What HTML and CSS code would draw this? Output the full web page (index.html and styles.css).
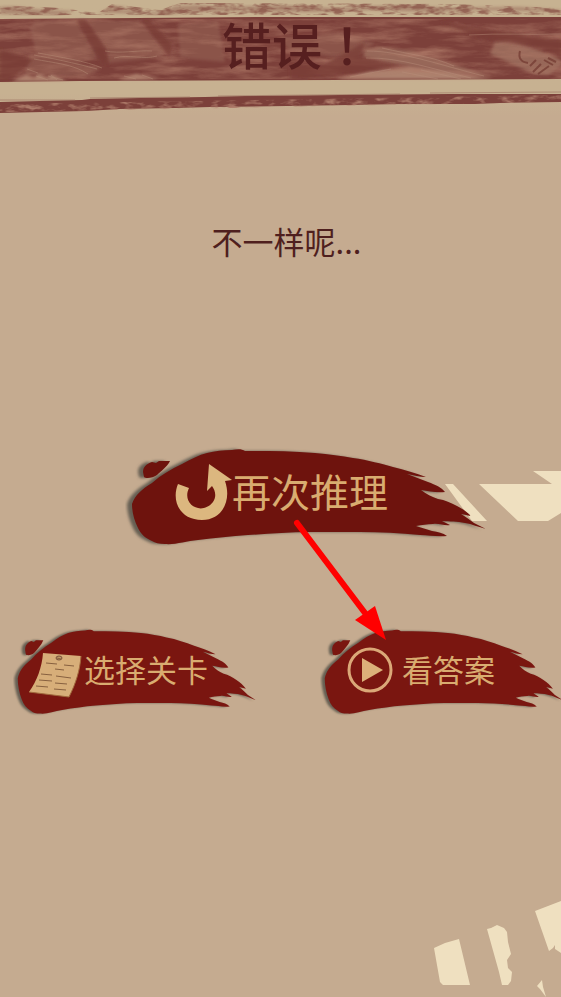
FILE: index.html
```html
<!DOCTYPE html>
<html lang="zh-CN">
<head>
<meta charset="utf-8">
<meta name="viewport" content="width=device-width, initial-scale=1">
<title>错误！</title>
<link rel="stylesheet" href="styles.css">
</head>
<body>
<svg class="defs" aria-hidden="true">
  <defs>
    <filter id="soft" x="-10%" y="-10%" width="120%" height="120%"><feGaussianBlur stdDeviation="1.5"/></filter>
    <path id="stroke" d="M7 59C10 50 17 44 27 38C36 30 46 24 57 19C66 14 74 10 82 8C90 6 98 5 107 5C113 4 117 4 120 6C142 6 166 6 190 8C204 9 217 11 228 13C243 15 257 19 268 22C280 25 291 28 301 32C294 32 289 30 282 29C289 32 296 34 303 37C311 40 316 42 320 47C311 48 304 46 296 45C301 49 307 52 313 54C320 55 326 58 332 61C338 64 342 67 346 71L336 69C341 72 345 75 349 78L361 84C353 82 347 79 340 78C332 76 325 77 317 76L325 80C319 81 314 78 308 79C302 79 297 80 291 81C296 83 302 84 307 86C313 87 318 88 322 91C312 92 304 90 295 90C275 88 255 87 235 87L185 87C163 87 143 89 123 90C106 91 90 93 73 95C61 96 50 100 40 99C34 99 30 98 27 96C20 93 16 89 13 83C9 75 7 67 7 59Z"/>
    <path id="drop" d="M18 27C18 22 21 19 27 17L31 18L34 16L45 16C42 22 36 26 32 30C28 33 21 34 19 32Z"/>
    <symbol id="brush" viewBox="0 0 364 104" preserveAspectRatio="none">
      <g class="shade" filter="url(#soft)"><use href="#stroke" x="-5"/><use href="#drop" x="-5"/></g>
      <use href="#stroke"/><use href="#drop"/>
    </symbol>
  </defs>
</svg>

<main class="screen">
  <header class="banner">
    <svg class="banner-art" viewBox="0 0 561 116" preserveAspectRatio="none" aria-hidden="true">
      <defs>
        <linearGradient id="fade" x1="0" y1="0" x2="0" y2="1"><stop offset="0" stop-color="#c7b291"/><stop offset=".8" stop-color="#c7b191"/><stop offset="1" stop-color="#c5ab90"/></linearGradient>
        <filter id="grain" x="0" y="0" width="100%" height="100%" color-interpolation-filters="sRGB">
          <feTurbulence type="fractalNoise" baseFrequency=".022 .12" numOctaves="5" seed="8"/>
          <feColorMatrix values="0 0 0 0 .68  0 0 0 0 .47  0 0 0 0 .4  1.6 0 0 0 -.62"/>
          <feComposite in2="SourceAlpha" operator="in"/>
        </filter>
        <filter id="fiber" x="0" y="0" width="100%" height="100%" color-interpolation-filters="sRGB">
          <feTurbulence type="fractalNoise" baseFrequency=".07 .2" numOctaves="3" seed="4"/>
          <feColorMatrix values="0 0 0 0 .55  0 0 0 0 .34  0 0 0 0 .29  4 0 0 0 -1.7"/>
          <feComposite in2="SourceAlpha" operator="in"/>
          <feGaussianBlur stdDeviation=".7"/>
        </filter>
        <filter id="flecks" x="0" y="0" width="100%" height="100%" color-interpolation-filters="sRGB">
          <feTurbulence type="fractalNoise" baseFrequency=".08 .2" numOctaves="3" seed="11"/>
          <feColorMatrix values="0 0 0 0 .68  0 0 0 0 .48  0 0 0 0 .41  3 0 0 0 -1.4"/>
          <feComposite in2="SourceAlpha" operator="in"/>
        </filter>
        <filter id="haze"><feGaussianBlur stdDeviation="1.5"/></filter>
      </defs>
      <rect width="561" height="116" fill="url(#fade)"/>
      <g filter="url(#haze)" fill="#a37a66" opacity=".75">
        <path d="M0 7C15 5 30 9 45 10L75 11L60 15L0 14Z"/>
        <path d="M98 14L114 6L126 7L120 11L132 9L145 12L162 12L175 6L200 5L230 7L280 5L330 8L400 5L450 8L520 7L561 10V12L480 10L430 12L370 10L310 12L240 11L190 12L165 15L145 14L112 13Z"/>
      </g>
      <path filter="url(#fiber)" opacity=".8" d="M0 5L60 8L98 13L112 4L160 10L180 3L450 4L561 8V15H0Z"/>
      <path class="maroon" d="M0 19L140 18L260 17H561V79L340 80L80 81L0 82Z"/>
      <g filter="url(#haze)">
        <path class="dust" d="M35 21L76 20L99 58L75 63L36 53L30 28ZM86 21H140L166 49L161 57L108 63L105 50ZM178 24L218 21L225 62L180 58ZM278 38L340 33L375 43L351 60L290 50ZM30 54L58 57L101 69L85 77L25 75Z"/>
        <path class="light" d="M12 81L26 75L34 78L39 74L47 78L52 75L67 81ZM118 80L136 74L158 79ZM336 79L370 71L410 67L445 71L492 79Z"/>
        <path class="log" d="M365 50L378 47L412 51L440 60L493 77L450 71L393 64L363 58ZM495 42L510 40L554 56L561 60V66L548 75L534 74L490 54Z"/>
      </g>
      <path filter="url(#grain)" d="M0 19H561V79H0Z"/>
      <g filter="url(#haze)">
        <path class="fold" d="M77 20H86L106 48L109 65L99 61ZM141 20H150L172 45L170 57L162 48ZM0 49L33 60L10 80H0ZM440 22L480 38L540 48L561 57V40L510 33ZM290 66L325 64L365 42L360 56L400 66L335 76L290 78Z"/>
      </g>
      <g class="hair">
        <path d="M34 55C50 58 75 63 97 69M34 59C54 63 73 64 88 74M38 53C60 57 86 61 102 68M105 51C120 54 138 50 152 51M114 58C129 54 144 60 157 56M367 51C401 51 440 65 484 76M382 48C411 55 432 56 454 66M366 58C400 57 435 70 471 78M402 72L438 79M421 70L461 79M350 77L391 69M469 35C500 33 530 35 561 34"/>
        <path d="M27 69L38 73M48 76L63 80M36 76L48 80M51 75L57 80M124 76L136 79M142 75L153 79"/>
      </g>
      <g class="knot"><path d="M520 51C518 58 521 62 528 63M530 66L536 60M533 72L541 64M538 74L549 66M544 60L553 65M548 58L556 62"/></g>
      <path class="maroon" d="M0 102L40 101L82 100L90 99L140 98L205 97L245 96L340 95L450 94L561 94V102L500 103L475 104L400 104L350 105L287 106L210 107L175 108L120 109L86 111L0 113Z"/>
      <path filter="url(#flecks)" d="M0 104L561 95V102L0 112Z"/>
      <path class="edge" d="M0 100L75 100M90 98L190 97M218 96L400 94M430 93L561 92"/>
    </svg>
    <h1 class="title">错误<span lang="zh-TW">！</span></h1>
  </header>

  <p class="message">不一样呢...</p>

  <section class="actions">
    <svg class="shards" viewBox="0 0 120 54" aria-hidden="true"><path d="M4 15H12L46 52H31ZM38 15H111L92 2H120V44L107 52H77Z"/></svg>
    <button class="brush-btn primary" type="button">
      <svg class="brush" aria-hidden="true"><use href="#brush" width="100%" height="100%"/></svg>
      <svg class="icon retry" viewBox="0 0 57 57" aria-hidden="true"><path d="M3 20L14 24C6 41 27 52 38 38C42 32 40 26 37 22L32 27L34 0L57 16L50 17C57 37 47 56 27 56C5 56-4 37 3 20Z"/></svg>
      <span>再次推理</span>
    </button>
    <div class="pair">
      <button class="brush-btn levels" type="button">
        <svg class="brush" aria-hidden="true"><use href="#brush" width="100%" height="100%"/></svg>
        <svg class="icon note" viewBox="0 -10 54 56" aria-hidden="true">
          <path class="paper" d="M15 1L53 4C52 18 48 31 41 45L1 40C9 29 14 15 15 1Z"/>
          <path class="rim" d="M1 40L41 45C48 31 52 18 53 4"/>
          <ellipse cx="31" cy="6" rx="3" ry="2"/><path class="pin" d="M29 6L33 7"/>
          <path class="rules" d="M18 11L29 12M36 13L46 14M27 17L36 18M13 22L24 23M28 24L43 26M11 28L24 29M27 31L39 32M8 34L20 35M26 37L38 38"/>
        </svg>
        <span>选择关卡</span>
      </button>
      <button class="brush-btn answer" type="button">
        <svg class="brush" aria-hidden="true"><use href="#brush" width="100%" height="100%"/></svg>
        <svg class="icon play" viewBox="0 0 46 46" aria-hidden="true"><circle cx="23" cy="23" r="21"/><path d="M15 11L36 23L15 35Z"/></svg>
        <span>看答案</span>
      </button>
    </div>
    <svg class="pointer" viewBox="0 0 96 122" aria-hidden="true"><path d="M5 4L73 94"/><polygon points="63,101 83,87 94,121"/></svg>
  </section>

  <svg class="scraps" viewBox="0 0 130 100" aria-hidden="true"><path d="M3 51L14 46L28 42L39 88H12L9 85ZM56 32L60 31L66 28L73 31L76 35L77 45L80 57L76 63L77 71L81 75L80 84L77 88H71L68 75ZM104 14L130 4V56L124 52V48L122 51L118 54ZM106 89L111 83L112 90L115 100L109 92Z"/></svg>
</main>
</body>
</html>
```
FILE: styles.css
```css
* {
  box-sizing: border-box;
}

body {
  margin: 0;
  background: #c5ab90;
  color: #4f1f1e;
  font-family: "Noto Sans CJK SC", "Noto Sans", sans-serif;
}

.defs {
  position: absolute;
  width: 0;
  height: 0;
}

.screen {
  position: relative;
  min-height: 100vh;
  overflow: hidden;
}

.banner {
  position: relative;
  height: 116px;
  padding: 6px 0 0 33px;
  text-align: center;
}

.banner-art {
  position: absolute;
  inset: 0;
  width: 100%;
  height: 100%;
}

.maroon {
  fill: #7c403a;
}

.dust {
  fill: #a17060;
  opacity: 0.4;
}

.light {
  fill: #bd9880;
  opacity: 0.75;
}

.log {
  fill: #a27664;
  opacity: 0.7;
}

.fold {
  fill: #7a3d37;
  opacity: 0.75;
}

.hair {
  fill: none;
  stroke: #b78f79;
  stroke-width: 1;
  opacity: 0.45;
}

.edge {
  fill: none;
  stroke: #9b705f;
  stroke-width: 1;
  opacity: 0.6;
}

.knot {
  fill: none;
  stroke: #71382f;
  stroke-width: 2;
  opacity: 0.7;
}

.title {
  position: relative;
  margin: 0;
  color: #561f1f;
  font-size: 50px;
  font-weight: 500;
  line-height: 74px;
}

.title span {
  font-family: "Noto Sans CJK TC", "Noto Sans", sans-serif;
}

.message {
  margin: 102px 0 0;
  padding-left: 12px;
  font-size: 31px;
  line-height: 46px;
  text-align: center;
}

.actions {
  position: relative;
  margin-top: 181px;
}

.brush-btn {
  position: relative;
  display: flex;
  align-items: center;
  padding: 0;
  border: 0;
  background: none;
  color: #d9ac70;
  font: inherit;
  white-space: nowrap;
  cursor: pointer;
}

.brush-btn span,
.icon {
  position: relative;
  flex: none;
}

.brush-btn span {
  padding-bottom: 4px;
}

.brush {
  position: absolute;
  inset: 0;
  width: 100%;
  height: 100%;
  fill: #7a1610;
}

.shade {
  fill: #665f52;
}

.primary {
  width: 364px;
  height: 104px;
  margin-left: 125px;
  padding: 0 0 10px 50px;
  font-size: 39px;
}

.primary .brush {
  fill: #6e130d;
}

.pair {
  display: flex;
  justify-content: space-between;
  margin: 77px -4px 0 13px;
}

.levels,
.answer {
  width: 245px;
  height: 92px;
  font-size: 31px;
}

.levels {
  gap: 2px;
  padding: 0 0 4px 15px;
}

.answer {
  gap: 9px;
  padding: 0 0 4px 27px;
}

.retry {
  width: 57px;
  height: 57px;
  fill: #dcb77f;
}

.note {
  width: 54px;
  height: 56px;
  fill: none;
}

.paper {
  fill: #d7ae79;
}

.rim {
  stroke: #a0683c;
}

.note ellipse {
  fill: #c29b68;
  stroke: #76503a;
}

.pin,
.rules {
  stroke: #87603f;
}

.play {
  width: 46px;
  height: 46px;
  fill: #dcb17a;
}

.play circle {
  fill: none;
  stroke: #dba878;
  stroke-width: 3;
}

.shards {
  position: absolute;
  top: 24px;
  right: 0;
  width: 120px;
  height: 54px;
  fill: #efe0c0;
}

.pointer {
  position: absolute;
  top: 74px;
  left: 292px;
  width: 96px;
  height: 122px;
  fill: #ff0000;
  pointer-events: none;
}

.pointer path {
  stroke: #ff0000;
  stroke-width: 6;
  stroke-linecap: round;
}

.scraps {
  position: absolute;
  right: 0;
  bottom: 0;
  width: 130px;
  height: 100px;
  fill: #efe0c0;
}
```
